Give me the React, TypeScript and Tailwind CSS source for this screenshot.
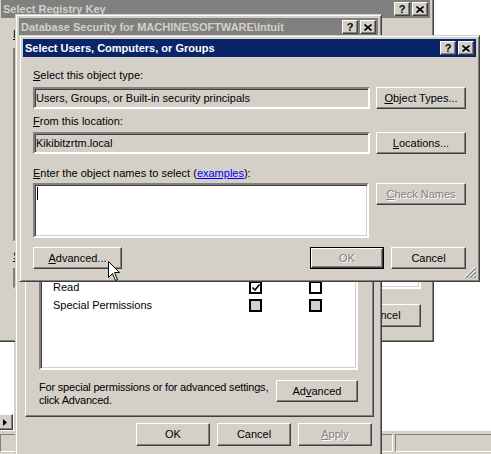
import React from 'react';

const RAISED =
  'border border-t-white border-l-white border-r-[#404040] border-b-[#404040] shadow-[inset_-1px_-1px_#808080,inset_1px_1px_#d4d0c8] bg-[#d4d0c8]';
const SUNKEN =
  'border-2 border-t-[#808080] border-l-[#808080] border-r-white border-b-white shadow-[inset_1px_1px_#404040,inset_-1px_-1px_#d4d0c8]';
const FRAME =
  'border border-t-[#d4d0c8] border-l-[#d4d0c8] border-r-[#404040] border-b-[#404040] shadow-[inset_1px_1px_white,inset_-1px_-1px_#808080] bg-[#d4d0c8] p-[3px]';

const CloseGlyph = () => (
  <svg width="8" height="7" viewBox="0 0 8 7">
    <path d="M0.5 0.5 L7.5 6.5 M7.5 0.5 L0.5 6.5" stroke="black" strokeWidth="1.6" fill="none" />
  </svg>
);

const TitleButtons = () => (
  <div className="flex gap-[2px] pr-[2px]">
    <div className={`${RAISED} w-[16px] h-[14px] flex items-center justify-center font-bold text-[11px] leading-none text-black`}>?</div>
    <div className={`${RAISED} w-[16px] h-[14px] flex items-center justify-center`}>
      <CloseGlyph />
    </div>
  </div>
);

const TitleBar = ({ title, active }: { title: string; active?: boolean }) => (
  <div
    className={`h-[18px] shrink-0 flex items-center justify-between pl-[2px] ${
      active ? 'bg-[#0a246a] text-white' : 'bg-[#808080] text-[#d4d0c8]'
    }`}
  >
    <span className="font-bold whitespace-nowrap">{title}</span>
    <TitleButtons />
  </div>
);

interface BtnProps {
  children: React.ReactNode;
  className?: string;
  disabled?: boolean;
  isDefault?: boolean;
}

const Btn = ({ children, className = '', disabled, isDefault }: BtnProps) => {
  const text = disabled ? 'text-[#808080] [text-shadow:1px_1px_0_white]' : 'text-black';
  if (isDefault) {
    return (
      <div className={`border border-black flex shrink-0 ${className}`}>
        <div className={`${RAISED} flex-1 flex items-center justify-center ${text}`}>{children}</div>
      </div>
    );
  }
  return (
    <div className={`${RAISED} shrink-0 flex items-center justify-center ${text} ${className}`}>{children}</div>
  );
};

const Check = ({ checked, gray }: { checked?: boolean; gray?: boolean }) => (
  <div
    className={`w-[13px] h-[13px] shrink-0 border-2 border-black flex items-center justify-center ${
      gray ? 'bg-[#d4d0c8]' : 'bg-white'
    }`}
  >
    {checked && (
      <svg width="8" height="7" viewBox="0 0 8 7">
        <path d="M0.5 3.5 L3 6 L7.5 0.5" stroke="black" strokeWidth="1.6" fill="none" />
      </svg>
    )}
  </div>
);

function RegeditBackdrop() {
  return (
    <div className="absolute inset-0 flex flex-col">
      <div className="flex-1 flex">
        <div className="w-[13px] flex flex-col bg-white">
          <div className="flex-1" />
          <div className="h-[16px] bg-[#d4d0c8] flex justify-end overflow-hidden">
            <div className={`${RAISED} w-[16px] h-[16px] shrink-0 flex items-center justify-center`}>
              <svg width="4" height="7" viewBox="0 0 4 7">
                <path d="M0 0 L4 3.5 L0 7 Z" fill="black" />
              </svg>
            </div>
          </div>
        </div>
        <div className="w-[4px] bg-[#d4d0c8] border-l border-white" />
        <div className="flex-1 bg-white" />
      </div>
      <div className="h-[24px] bg-[#d4d0c8] border-t border-white flex gap-[2px] pt-[3px] overflow-hidden">
        <div className="w-[393px] h-[18px] shrink-0 border border-t-[#808080] border-l-[#808080] border-r-white border-b-white" />
        <div className="w-[120px] h-[18px] shrink-0 border border-t-[#808080] border-l-[#808080] border-r-white border-b-white" />
      </div>
    </div>
  );
}

function RegistryKeyWindow() {
  // only a sliver of this dialog shows, so its labels are clipped to that sliver
  return (
    <div className={`absolute left-[-3px] top-[-4px] w-[437px] h-[346px] flex flex-col ${FRAME}`}>
      <TitleBar title="Select Registry Key" />
      <div className="flex-1 flex flex-col pl-[12px] pr-[9px]">
        <div className="mt-[10px] w-[4px] overflow-hidden whitespace-nowrap">
          <u>L</u>ook in:
        </div>
        <div className={`${SUNKEN} mt-[7px] h-[194px] bg-white`} />
        <div className="mt-[8px] w-[4px] overflow-hidden whitespace-nowrap">
          <u>S</u>election:
        </div>
        <div className={`${SUNKEN} mt-[5px] h-[21px] bg-white`} />
        <div className="mt-[15px] flex justify-end gap-[6px]">
          <Btn className="w-[75px] h-[23px]">{''}</Btn>
          <Btn className="w-[75px] h-[23px]">Cancel</Btn>
        </div>
      </div>
    </div>
  );
}

function SecurityWindow() {
  const rows = [
    { name: '', allow: false, gray: false },
    { name: 'Read', allow: true, gray: false },
    { name: 'Special Permissions', allow: false, gray: true },
  ];
  return (
    <div className={`absolute left-[15px] top-[14px] w-[367px] h-[443px] flex flex-col ${FRAME}`}>
      <TitleBar title="Database Security for MACHINE\SOFTWARE\Intuit" />
      <div className="flex-1 flex flex-col">
        <div className="h-[20px] shrink-0" />
        <div className="flex-1 ml-[6px] mr-[4px] flex flex-col pl-[13px] pr-[15px] border border-t-white border-l-white border-r-[#404040] border-b-[#404040] shadow-[inset_-1px_-1px_#808080]">
          <div className={`${SUNKEN} mt-auto h-[114px] bg-white pt-[2px] pl-[12px] flex flex-col`}>
            {rows.map((row, i) => (
              <div key={i} className="h-[18px] flex items-center">
                <span className="w-[196px] whitespace-nowrap">{row.name}</span>
                <Check checked={row.allow} gray={row.gray} />
                <div className="w-[47px]" />
                <Check gray={row.gray} />
              </div>
            ))}
          </div>
          <div className="mt-[10px] mb-[9px] h-[27px] flex items-start">
            <div className="flex-1 min-w-0 mt-[1px] whitespace-nowrap tracking-[-0.2px]">
              For special permissions or for advanced settings,
              <br />
              click Advanced.
            </div>
            <Btn className="w-[82px] h-[22px]">
              <span>
                Ad<u>v</u>anced
              </span>
            </Btn>
          </div>
        </div>
        <div className="mt-[6px] mb-[7px] h-[23px] shrink-0 flex justify-end gap-[7px] pr-[6px]">
          <Btn className="w-[74px] h-[23px]">OK</Btn>
          <Btn className="w-[74px] h-[23px]">Cancel</Btn>
          <Btn className="w-[74px] h-[23px]" disabled>
            <span>
              <u>A</u>pply
            </span>
          </Btn>
        </div>
      </div>
    </div>
  );
}

function SelectUsersWindow() {
  return (
    <div className={`absolute left-[19px] top-[35px] w-[461px] h-[247px] flex flex-col ${FRAME}`}>
      <TitleBar title="Select Users, Computers, or Groups" active />
      <div className="flex-1 flex flex-col px-[10px]">
        <div className="mt-[12px]">
          <u>S</u>elect this object type:
        </div>
        <div className="mt-[5px] flex gap-[6px]">
          <div className={`${SUNKEN} w-[337px] h-[22px] flex items-center pl-[1px] whitespace-nowrap`}>
            Users, Groups, or Built-in security principals
          </div>
          <Btn className="w-[90px] h-[22px]">
            <span>
              <u>O</u>bject Types...
            </span>
          </Btn>
        </div>
        <div className="mt-[6px]">
          <u>F</u>rom this location:
        </div>
        <div className="mt-[4px] flex gap-[6px]">
          <div className={`${SUNKEN} w-[337px] h-[22px] flex items-center pl-[1px]`}>Kikibitzrtm.local</div>
          <Btn className="w-[90px] h-[22px]">
            <span>
              <u>L</u>ocations...
            </span>
          </Btn>
        </div>
        <div className="mt-[13px]">
          <u>E</u>nter the object names to select (<span className="text-[#0000ff] underline">examples</span>):
        </div>
        <div className="mt-[3px] flex gap-[7px] items-start">
          <div className={`${SUNKEN} w-[336px] h-[55px] bg-white pl-[2px] pt-[2px]`}>
            <div className="w-px h-[13px] bg-black" />
          </div>
          <Btn className="w-[90px] h-[22px]" disabled>
            <span>
              <u>C</u>heck Names
            </span>
          </Btn>
        </div>
        <div className="mt-[9px] flex items-center">
          <Btn className="w-[89px] h-[22px]">
            <span>
              <u>A</u>dvanced...
            </span>
          </Btn>
          <div className="flex-1" />
          <Btn className="w-[74px] h-[22px]" isDefault disabled>
            OK
          </Btn>
          <Btn className="w-[75px] h-[22px] ml-[7px]">Cancel</Btn>
        </div>
      </div>
      {/* size grip */}
      <svg className="absolute right-[3px] bottom-[3px]" width="12" height="12" viewBox="0 0 12 12">
        <path d="M11 1 L1 11 M11 5 L5 11 M11 9 L9 11" stroke="white" strokeWidth="1" />
        <path d="M12 2 L2 12 M12 6 L6 12 M12 10 L10 12" stroke="#808080" strokeWidth="1.2" />
      </svg>
    </div>
  );
}

const Cursor = () => (
  <svg className="absolute left-[108px] top-[261px]" width="13" height="21" viewBox="0 0 13 21">
    <path
      d="M0.5 0.5 L0.5 16.5 L4.5 12.5 L7.5 19.5 L9.5 18.5 L6.5 11.5 L11.5 11.5 Z"
      fill="white"
      stroke="black"
      strokeWidth="1"
      strokeLinejoin="miter"
    />
  </svg>
);

export default function App() {
  return (
    <div className="relative w-[491px] h-[454px] overflow-hidden bg-white text-[11px] leading-[13px] text-black font-['Liberation_Sans',Arial,sans-serif]">
      <RegeditBackdrop />
      <RegistryKeyWindow />
      <SecurityWindow />
      <SelectUsersWindow />
      <Cursor />
    </div>
  );
}
